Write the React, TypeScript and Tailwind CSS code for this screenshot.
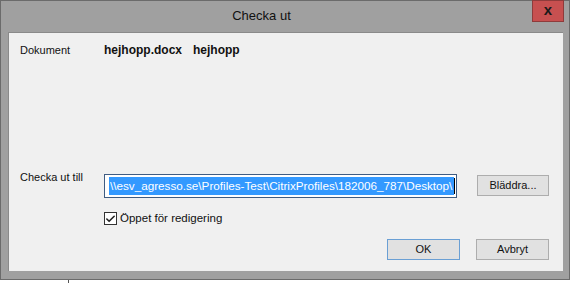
import { Check } from "lucide-react";

const FONT = "font-['Liberation_Sans',Arial,sans-serif]";

function WinButton({ label, primary }: { label: string; primary?: boolean }) {
  return (
    <button
      className={`flex h-[21px] w-[73px] items-center justify-center border bg-[#e1e1e1] text-[11px] text-[#111] ${
        primary ? "border-[#6a9fd4]" : "border-[#adadad]"
      }`}
    >
      {label}
    </button>
  );
}

export default function App() {
  const path = "\\\\esv_agresso.se\\Profiles-Test\\CitrixProfiles\\182006_787\\Desktop\\";

  return (
    <div className={`flex h-[283px] w-[571px] flex-col bg-white ${FONT}`}>
      {/* dialog window */}
      <div className="flex h-[280px] w-[570px] flex-col border border-[#6b6b6b] bg-[#a0a0a0]">
        {/* title bar */}
        <div className="flex h-[31px] shrink-0 items-start">
          <div className="flex h-full flex-1 items-center justify-center pb-[1px] pr-[10px] text-[13px] text-[#111]">
            Checka ut
          </div>
          <button className="mr-[5px] mt-[-1px] flex h-[22px] w-[32px] items-center justify-center border border-[#8f3b3b] bg-[#c75050] pb-[3px] text-[15px] font-bold leading-none text-[#1a1a1a]">
            x
          </button>
        </div>

        {/* client area */}
        <div className="ml-[7px] mr-[6px] flex h-[239px] flex-col border-l border-t border-[#8a8a8a] bg-[#f0f0f0] pl-[11px] pr-[13px] text-[11px] text-[#111]">
          <div className="mt-[11px] flex h-[13px] items-center leading-[13px]">
            <span className="w-[84px]">Dokument</span>
            <span className="w-[89px] text-[12px] font-bold">hejhopp.docx</span>
            <span className="text-[12px] font-bold">hejhopp</span>
          </div>

          <div className="mt-[114px] flex items-start">
            <span className="w-[84px] leading-[13px]">Checka ut till</span>
            <div className="mt-[3px] flex h-[24px] w-[353px] items-center border border-[#3f5c82] bg-white pl-[4px]">
              <span className="flex h-[18px] items-center whitespace-nowrap bg-[#3399ff] pl-[1px] pr-[2px] text-[11.7px] text-white">
                {path}
              </span>
              <span className="h-[16px] w-px bg-black" />
            </div>
            <div className="ml-[20px] mt-[4px]">
              <button className="flex h-[21px] w-[72px] items-center justify-center border border-[#adadad] bg-[#e1e1e1] text-[11px] text-[#111]">
                Bläddra...
              </button>
            </div>
          </div>

          <div className="ml-[84px] mt-[14px] flex items-center gap-[3px]">
            <span className="flex h-[13px] w-[13px] items-center justify-center border border-[#333] bg-white">
              <Check size={12} strokeWidth={3.5} className="text-[#222]" />
            </span>
            <span className="text-[11.5px] leading-[13px]">Öppet för redigering</span>
          </div>

          <div className="mt-[14px] flex justify-end gap-[16px] pr-[1px]">
            <WinButton label="OK" primary />
            <WinButton label="Avbryt" />
          </div>
        </div>
      </div>

      {/* stroke below the window */}
      <div className="flex flex-1">
        <div className="ml-[68px] h-full w-px bg-[#555]" />
      </div>
    </div>
  );
}
